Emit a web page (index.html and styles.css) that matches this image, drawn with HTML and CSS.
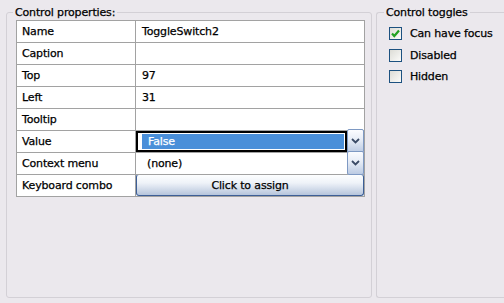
FILE: index.html
```html
<!DOCTYPE html>
<html>
<head>
<meta charset="utf-8">
<link rel="stylesheet" href="styles.css">
</head>
<body>
<div class="page">
  <fieldset class="group group-props">
    <legend>Control properties:</legend>
    <table class="props">
      <tr><td class="k">Name</td><td class="v">ToggleSwitch2</td></tr>
      <tr><td class="k">Caption</td><td class="v"></td></tr>
      <tr><td class="k">Top</td><td class="v">97</td></tr>
      <tr><td class="k">Left</td><td class="v">31</td></tr>
      <tr><td class="k">Tooltip</td><td class="v"></td></tr>
      <tr><td class="k">Value</td><td class="v vc">
        <div class="combo">
          <div class="field focused"><div class="sel">False</div></div>
          <div class="dd"><svg width="9" height="6" viewBox="0 0 9 6"><polyline points="1,1 4.5,4.5 8,1" fill="none" stroke="#3a4a66" stroke-width="1.8"/></svg></div>
        </div>
      </td></tr>
      <tr><td class="k">Context menu</td><td class="v vc">
        <div class="combo">
          <div class="field plain">(none)</div>
          <div class="dd"><svg width="9" height="6" viewBox="0 0 9 6"><polyline points="1,1 4.5,4.5 8,1" fill="none" stroke="#3a4a66" stroke-width="1.8"/></svg></div>
        </div>
      </td></tr>
      <tr><td class="k">Keyboard combo</td><td class="v vc"><div class="btn">Click to assign</div></td></tr>
    </table>
  </fieldset>
  <fieldset class="group group-toggles">
    <legend>Control toggles</legend>
    <ul class="checks">
      <li><span class="cb"><svg width="11" height="11" viewBox="0 0 11 11"><path d="M2 5.5 L4.3 8 L9 2.5" fill="none" stroke="#21a121" stroke-width="2.2"/></svg></span>Can have focus</li>
      <li><span class="cb"></span>Disabled</li>
      <li><span class="cb"></span>Hidden</li>
    </ul>
  </fieldset>
</div>
</body>
</html>
```

FILE: styles.css
```css
html, body {
  margin: 0;
  padding: 0;
  background: #ebe8ed;
  font-family: "DejaVu Sans", sans-serif;
  font-size: 11px;
  color: #000;
  overflow: hidden;
}
.page {
  display: flex;
  gap: 4px;
  padding: 6px 0 0 6px;
  width: 504px;
  box-sizing: border-box;
}
.group {
  margin: 0;
  padding: 0;
  min-width: 0;
  box-sizing: border-box;
  height: 292px;
  border: 1px solid #d3d0d6;
  border-radius: 3px;
  -webkit-text-stroke: 0.25px #000;
}
.group legend {
  padding: 0 2px;
  line-height: 13px;
  letter-spacing: -0.15px;
}
.group-props {
  width: 366px;
  flex: none;
}
.group-props legend {
  margin-left: 6px;
}
.group-toggles {
  flex: 1;
  border-right: none;
  border-top-right-radius: 0;
  border-bottom-right-radius: 0;
}
.group-toggles legend {
  margin-left: 7px;
}
.props {
  border-collapse: collapse;
  margin: 1px 0 0 9px;
  width: 349px;
  background: #fff;
  border: 1px solid #a2a2a2;
}
.props td {
  border: 1px solid #a2a2a2;
  height: 22px;
  padding: 0;
  box-sizing: border-box;
  letter-spacing: -0.15px;
  vertical-align: middle;
}
.props .k {
  width: 119px;
  padding-left: 5px;
}
.props .v {
  padding-left: 6px;
}
.props .vc {
  padding: 0;
}
.combo {
  display: flex;
  height: 21px;
}
.field {
  flex: 1;
  box-sizing: border-box;
  display: flex;
  align-items: center;
}
.field.focused {
  border: 2px solid #000;
  padding: 1px 1px 1px 4px;
}
.sel {
  flex: 1;
  height: 100%;
  background: #4a8fd9;
  color: #fff;
  -webkit-text-stroke: 0.25px #fff;
  display: flex;
  align-items: center;
  padding-left: 6px;
}
.field.plain {
  padding-left: 11px;
}
.dd {
  width: 17px;
  margin: -2px 0 -1px 0;
  box-sizing: border-box;
  border: 1px solid #7e99c3;
  border-radius: 2px;
  background: linear-gradient(#fbfcff 0%, #e6ecf6 45%, #bccbe3 100%);
  display: flex;
  align-items: center;
  justify-content: center;
}
.btn {
  height: 22px;
  margin: -1px 0 0 0;
  box-sizing: border-box;
  border: 1px solid #3d5f97;
  border-top-color: #7f9cc8;
  border-radius: 3px;
  background: linear-gradient(#fdfeff 0%, #eef2f8 40%, #b6c5dc 100%);
  display: flex;
  align-items: center;
  justify-content: center;
}
.checks {
  list-style: none;
  margin: 8px 0 0 12px;
  padding: 0;
  display: flex;
  flex-direction: column;
  gap: 8.5px;
}
.checks li {
  display: flex;
  align-items: center;
  height: 13px;
  letter-spacing: -0.15px;
}
.cb {
  width: 13px;
  height: 13px;
  flex: none;
  box-sizing: border-box;
  border: 1px solid #1c5180;
  background: linear-gradient(135deg, #dcdcd6, #fbfbf9);
  margin-right: 8px;
  display: flex;
  align-items: center;
  justify-content: center;
}
```
